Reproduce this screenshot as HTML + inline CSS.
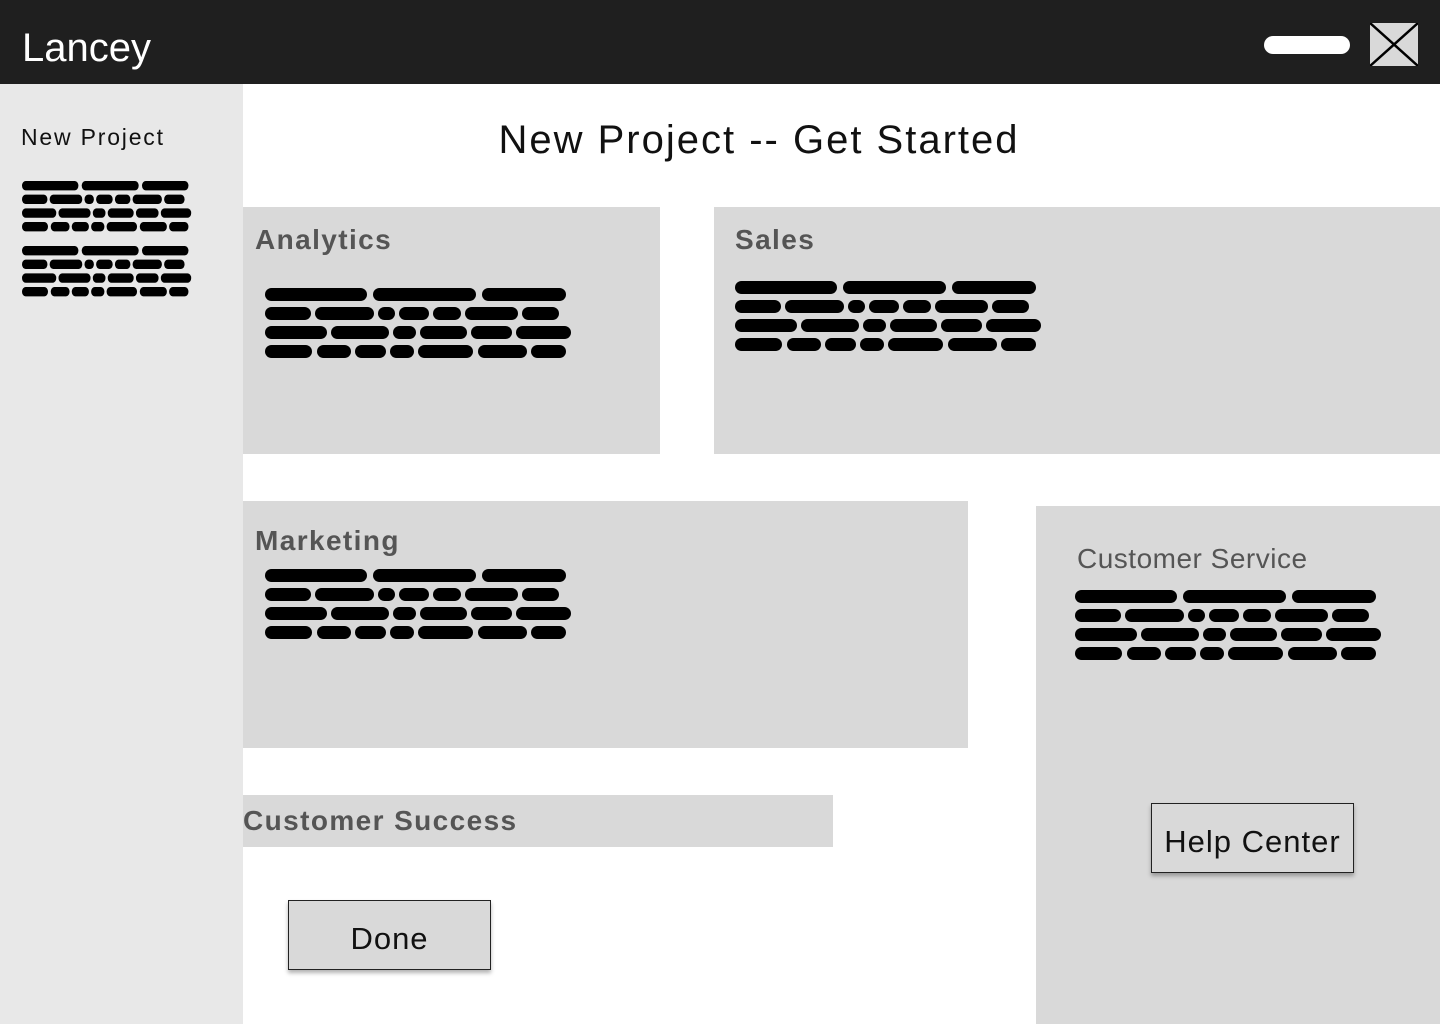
<!DOCTYPE html>
<html><head><meta charset="utf-8"><style>
*{margin:0;padding:0;box-sizing:border-box}
body{width:1440px;height:1024px;position:relative;background:#fff;font-family:"Liberation Sans",sans-serif;overflow:hidden}
.a{position:absolute}
.blk{position:absolute;width:310px;height:72px}
.blk span{position:absolute;height:13px;background:#000;border-radius:7px}
.h{position:absolute;font-weight:bold;font-size:28px;color:#555;letter-spacing:1.4px;white-space:nowrap}
.btn{position:absolute;background:#d9d9d9;border:1.5px solid #222;box-shadow:0 3px 4px rgba(0,0,0,.3);font-size:31px;color:#111;text-align:center;letter-spacing:1px}
</style></head><body>
<div class="a" style="left:0;top:0;width:1440px;height:84px;background:#1f1f1f"></div>
<div class="a" style="left:22px;top:26px;font-size:40px;color:#fff;line-height:44px">Lancey</div>
<div class="a" style="left:1264px;top:36px;width:86px;height:18px;background:#fff;border-radius:9px"></div>
<svg class="a" style="left:1370px;top:23px" width="48" height="43"><rect x="0" y="0" width="48" height="43" fill="#d9d9d9"/><path d="M0 0L48 43M48 0L0 43" stroke="#000" stroke-width="2.5"/></svg>

<div class="a" style="left:0;top:84px;width:243px;height:940px;background:#e8e8e8"></div>
<div class="a" style="left:21px;top:124px;font-size:23px;color:#111;letter-spacing:1.8px">New Project</div>

<div class="a" style="left:0;top:118px;width:1518px;text-align:center;font-size:40px;color:#111;letter-spacing:2px">New Project -- Get Started</div>

<div class="a" style="left:243px;top:207px;width:417px;height:247px;background:#d9d9d9"></div>
<div class="a" style="left:714px;top:207px;width:726px;height:247px;background:#d9d9d9"></div>
<div class="a" style="left:243px;top:501px;width:725px;height:247px;background:#d9d9d9"></div>
<div class="a" style="left:1036px;top:506px;width:404px;height:518px;background:#d9d9d9"></div>
<div class="a" style="left:243px;top:795px;width:590px;height:52px;background:#d9d9d9"></div>

<div class="h" style="left:255px;top:224px">Analytics</div>
<div class="h" style="left:735px;top:224px">Sales</div>
<div class="h" style="left:255px;top:525px">Marketing</div>
<div class="h" style="left:243px;top:805px">Customer Success</div>
<div class="a" style="left:1077px;top:543px;font-size:28px;color:#555;letter-spacing:0.5px">Customer Service</div>

<div class="btn" style="left:288px;top:900px;width:203px;height:70px;line-height:76px">Done</div>
<div class="btn" style="left:1151px;top:803px;width:203px;height:70px;line-height:76px">Help Center</div>

<!-- blocks -->
<div class="blk" style="left:265px;top:288px"><span style="left:0;top:0;width:102px"></span><span style="left:108px;top:0;width:103px"></span><span style="left:217px;top:0;width:84px"></span><span style="left:0;top:19px;width:46px"></span><span style="left:50px;top:19px;width:59px"></span><span style="left:113px;top:19px;width:17px"></span><span style="left:134px;top:19px;width:30px"></span><span style="left:168px;top:19px;width:28px"></span><span style="left:200px;top:19px;width:53px"></span><span style="left:257px;top:19px;width:37px"></span><span style="left:0;top:38px;width:62px"></span><span style="left:66px;top:38px;width:58px"></span><span style="left:128px;top:38px;width:23px"></span><span style="left:155px;top:38px;width:47px"></span><span style="left:206px;top:38px;width:41px"></span><span style="left:251px;top:38px;width:55px"></span><span style="left:0;top:57px;width:47px"></span><span style="left:52px;top:57px;width:34px"></span><span style="left:90px;top:57px;width:31px"></span><span style="left:125px;top:57px;width:24px"></span><span style="left:153px;top:57px;width:55px"></span><span style="left:213px;top:57px;width:49px"></span><span style="left:266px;top:57px;width:35px"></span></div>
<div class="blk" style="left:735px;top:281px"><span style="left:0;top:0;width:102px"></span><span style="left:108px;top:0;width:103px"></span><span style="left:217px;top:0;width:84px"></span><span style="left:0;top:19px;width:46px"></span><span style="left:50px;top:19px;width:59px"></span><span style="left:113px;top:19px;width:17px"></span><span style="left:134px;top:19px;width:30px"></span><span style="left:168px;top:19px;width:28px"></span><span style="left:200px;top:19px;width:53px"></span><span style="left:257px;top:19px;width:37px"></span><span style="left:0;top:38px;width:62px"></span><span style="left:66px;top:38px;width:58px"></span><span style="left:128px;top:38px;width:23px"></span><span style="left:155px;top:38px;width:47px"></span><span style="left:206px;top:38px;width:41px"></span><span style="left:251px;top:38px;width:55px"></span><span style="left:0;top:57px;width:47px"></span><span style="left:52px;top:57px;width:34px"></span><span style="left:90px;top:57px;width:31px"></span><span style="left:125px;top:57px;width:24px"></span><span style="left:153px;top:57px;width:55px"></span><span style="left:213px;top:57px;width:49px"></span><span style="left:266px;top:57px;width:35px"></span></div>
<div class="blk" style="left:265px;top:569px"><span style="left:0;top:0;width:102px"></span><span style="left:108px;top:0;width:103px"></span><span style="left:217px;top:0;width:84px"></span><span style="left:0;top:19px;width:46px"></span><span style="left:50px;top:19px;width:59px"></span><span style="left:113px;top:19px;width:17px"></span><span style="left:134px;top:19px;width:30px"></span><span style="left:168px;top:19px;width:28px"></span><span style="left:200px;top:19px;width:53px"></span><span style="left:257px;top:19px;width:37px"></span><span style="left:0;top:38px;width:62px"></span><span style="left:66px;top:38px;width:58px"></span><span style="left:128px;top:38px;width:23px"></span><span style="left:155px;top:38px;width:47px"></span><span style="left:206px;top:38px;width:41px"></span><span style="left:251px;top:38px;width:55px"></span><span style="left:0;top:57px;width:47px"></span><span style="left:52px;top:57px;width:34px"></span><span style="left:90px;top:57px;width:31px"></span><span style="left:125px;top:57px;width:24px"></span><span style="left:153px;top:57px;width:55px"></span><span style="left:213px;top:57px;width:49px"></span><span style="left:266px;top:57px;width:35px"></span></div>
<div class="blk" style="left:1075px;top:590px"><span style="left:0;top:0;width:102px"></span><span style="left:108px;top:0;width:103px"></span><span style="left:217px;top:0;width:84px"></span><span style="left:0;top:19px;width:46px"></span><span style="left:50px;top:19px;width:59px"></span><span style="left:113px;top:19px;width:17px"></span><span style="left:134px;top:19px;width:30px"></span><span style="left:168px;top:19px;width:28px"></span><span style="left:200px;top:19px;width:53px"></span><span style="left:257px;top:19px;width:37px"></span><span style="left:0;top:38px;width:62px"></span><span style="left:66px;top:38px;width:58px"></span><span style="left:128px;top:38px;width:23px"></span><span style="left:155px;top:38px;width:47px"></span><span style="left:206px;top:38px;width:41px"></span><span style="left:251px;top:38px;width:55px"></span><span style="left:0;top:57px;width:47px"></span><span style="left:52px;top:57px;width:34px"></span><span style="left:90px;top:57px;width:31px"></span><span style="left:125px;top:57px;width:24px"></span><span style="left:153px;top:57px;width:55px"></span><span style="left:213px;top:57px;width:49px"></span><span style="left:266px;top:57px;width:35px"></span></div>
<div class="blk" style="left:22px;top:181px;transform:scale(0.553,0.72);transform-origin:0 0"><span style="left:0;top:0;width:102px"></span><span style="left:108px;top:0;width:103px"></span><span style="left:217px;top:0;width:84px"></span><span style="left:0;top:19px;width:46px"></span><span style="left:50px;top:19px;width:59px"></span><span style="left:113px;top:19px;width:17px"></span><span style="left:134px;top:19px;width:30px"></span><span style="left:168px;top:19px;width:28px"></span><span style="left:200px;top:19px;width:53px"></span><span style="left:257px;top:19px;width:37px"></span><span style="left:0;top:38px;width:62px"></span><span style="left:66px;top:38px;width:58px"></span><span style="left:128px;top:38px;width:23px"></span><span style="left:155px;top:38px;width:47px"></span><span style="left:206px;top:38px;width:41px"></span><span style="left:251px;top:38px;width:55px"></span><span style="left:0;top:57px;width:47px"></span><span style="left:52px;top:57px;width:34px"></span><span style="left:90px;top:57px;width:31px"></span><span style="left:125px;top:57px;width:24px"></span><span style="left:153px;top:57px;width:55px"></span><span style="left:213px;top:57px;width:49px"></span><span style="left:266px;top:57px;width:35px"></span></div>
<div class="blk" style="left:22px;top:246px;transform:scale(0.553,0.72);transform-origin:0 0"><span style="left:0;top:0;width:102px"></span><span style="left:108px;top:0;width:103px"></span><span style="left:217px;top:0;width:84px"></span><span style="left:0;top:19px;width:46px"></span><span style="left:50px;top:19px;width:59px"></span><span style="left:113px;top:19px;width:17px"></span><span style="left:134px;top:19px;width:30px"></span><span style="left:168px;top:19px;width:28px"></span><span style="left:200px;top:19px;width:53px"></span><span style="left:257px;top:19px;width:37px"></span><span style="left:0;top:38px;width:62px"></span><span style="left:66px;top:38px;width:58px"></span><span style="left:128px;top:38px;width:23px"></span><span style="left:155px;top:38px;width:47px"></span><span style="left:206px;top:38px;width:41px"></span><span style="left:251px;top:38px;width:55px"></span><span style="left:0;top:57px;width:47px"></span><span style="left:52px;top:57px;width:34px"></span><span style="left:90px;top:57px;width:31px"></span><span style="left:125px;top:57px;width:24px"></span><span style="left:153px;top:57px;width:55px"></span><span style="left:213px;top:57px;width:49px"></span><span style="left:266px;top:57px;width:35px"></span></div>
</body></html>
